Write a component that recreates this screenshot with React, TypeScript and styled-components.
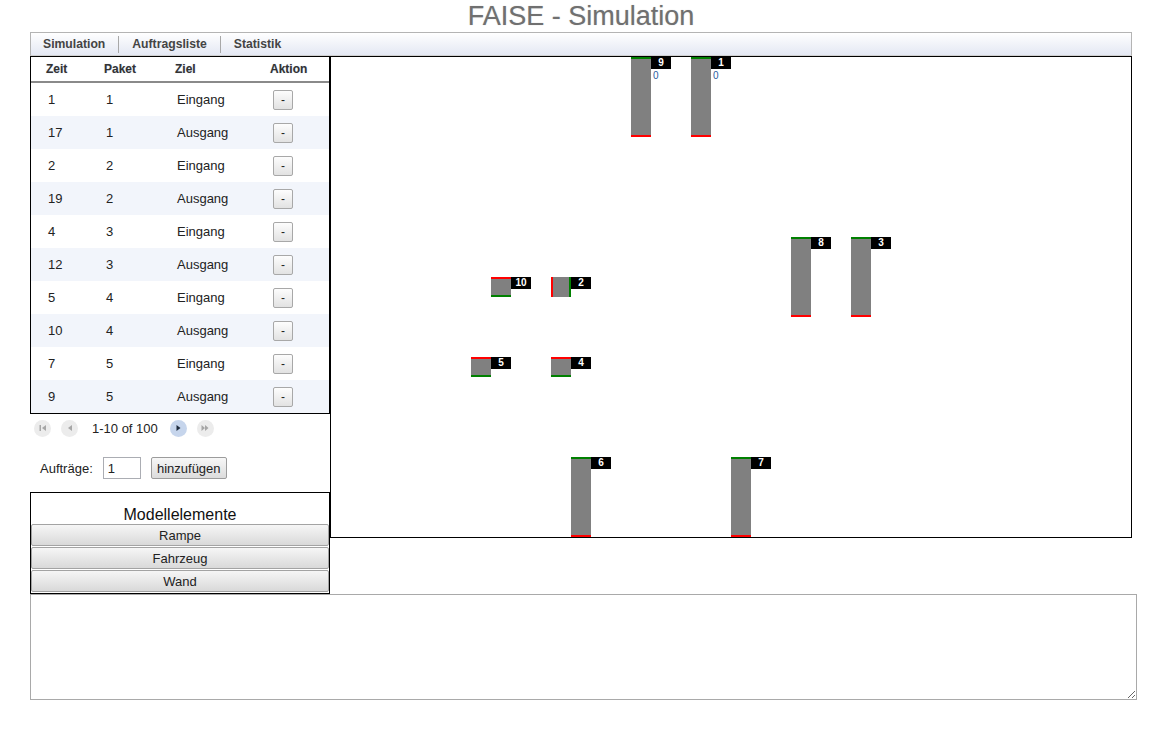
import React from "react";
import styled, { createGlobalStyle, css } from "styled-components";

const Global = createGlobalStyle`
  html, body { margin: 0; padding: 0; background: #fff; }
  body { font-family: "Liberation Sans", Arial, sans-serif; color: #222; }
  * { box-sizing: border-box; }
`;

const Page = styled.div`
  width: 1173px;
  padding-left: 30px;
`;

const Container = styled.div`
  width: 1102px;
`;

const Title = styled.h1`
  margin: 0;
  height: 32px;
  line-height: 32px;
  font-size: 27px;
  font-weight: normal;
  color: #707070;
  text-align: center;
  text-shadow: 0 0 1px rgba(80, 80, 80, 0.35);
`;

const TabBar = styled.div`
  height: 24px;
  display: flex;
  align-items: center;
  border: 1px solid #b4b4b4;
  border-bottom-color: #d0d0d0;
  background: linear-gradient(to bottom, #ffffff 0%, #f1f3f9 50%, #e4e8f3 100%);
`;

const Tab = styled.div<{ $first?: boolean }>`
  height: 17px;
  line-height: 17px;
  padding: 0 13px 0 ${(p) => (p.$first ? "12px" : "13px")};
  font-size: 12.2px;
  font-weight: bold;
  color: #444;
  border-left: ${(p) => (p.$first ? "none" : "1px solid #a8a8a8")};
`;

const MainRow = styled.div`
  display: flex;
  align-items: flex-start;
`;

const LeftCol = styled.div`
  width: 300px;
  display: flex;
  flex-direction: column;
`;

const Table = styled.div`
  border: 1px solid #000;
  width: 300px;
`;

const grid = css`
  display: grid;
  grid-template-columns: 58px 71px 100px 1fr;
  align-items: center;
`;

const HeadRow = styled.div`
  ${grid};
  height: 26px;
  border-bottom: 2px solid #8a8a8a;
  font-size: 12px;
  font-weight: bold;
  color: #333;
`;

const HeadCell = styled.div<{ $pad: number }>`
  padding-left: ${(p) => p.$pad}px;
  text-shadow: 0 0 1px rgba(60, 90, 160, 0.35);
`;

const Row = styled.div<{ $alt: boolean }>`
  ${grid};
  height: 33px;
  font-size: 13px;
  color: #222;
  background: ${(p) => (p.$alt ? "#f2f5fb" : "#fff")};
`;

const Cell = styled.div<{ $pad: number }>`
  padding-left: ${(p) => p.$pad}px;
`;

const SmallBtn = styled.button`
  width: 20px;
  height: 20px;
  padding: 0;
  border: 1px solid #a8a8a8;
  border-radius: 2px;
  background: linear-gradient(to bottom, #fdfdfd, #e2e2e2);
  font-family: "Liberation Sans", Arial, sans-serif;
  font-size: 12px;
  color: #222;
  line-height: 16px;
`;

const Pager = styled.div`
  height: 28px;
  display: flex;
  align-items: center;
  padding-left: 4px;
  font-size: 13px;
  color: #222;
`;

const PageIcon = styled.span<{ $active?: boolean; $ml: number }>`
  width: 17px;
  height: 17px;
  border-radius: 50%;
  margin-left: ${(p) => p.$ml}px;
  display: inline-flex;
  align-items: center;
  justify-content: center;
  background: ${(p) => (p.$active ? "#c6d5ec" : "#ececec")};
  color: ${(p) => (p.$active ? "#1d2a3c" : "#a6a6a6")};
`;

const PageText = styled.span`
  margin-left: 14px;
`;

const OrderRow = styled.div`
  margin-top: 15px;
  height: 22px;
  display: flex;
  align-items: center;
  padding-left: 10px;
  font-size: 13px;
  color: #222;
`;

const CountInput = styled.input`
  margin-left: 10px;
  width: 38px;
  height: 22px;
  border: 1px solid #abadb3;
  padding: 0 4px;
  font-family: "Liberation Sans", Arial, sans-serif;
  font-size: 13px;
  color: #222;
  outline: none;
`;

const AddBtn = styled.button`
  margin-left: 10px;
  width: 76px;
  height: 22px;
  padding: 0;
  border: 1px solid #9c9c9c;
  border-radius: 2px;
  background: linear-gradient(to bottom, #f7f7f7, #dcdcdc);
  font-family: "Liberation Sans", Arial, sans-serif;
  font-size: 13px;
  color: #222;
`;

const ModelBox = styled.div`
  margin-top: 13px;
  border: 1px solid #000;
  width: 300px;
  padding-bottom: 1px;
`;

const ModelTitle = styled.div`
  padding-top: 12px;
  line-height: 19px;
  font-size: 16px;
  text-align: center;
  color: #111;
`;

const ModelBtn = styled.button`
  display: block;
  width: 100%;
  height: 22px;
  margin: 0 0 1px 0;
  padding: 0;
  border: 1px solid #a3a3a3;
  border-radius: 2px;
  background: linear-gradient(to bottom, #f6f6f6, #d9d9d9);
  font-family: "Liberation Sans", Arial, sans-serif;
  font-size: 13px;
  color: #222;
  &:last-child { margin-bottom: 0; }
`;

const Canvas = styled.div`
  position: relative;
  width: 802px;
  height: 482px;
  border: 1px solid #000;
  background: #fff;
`;

type Kind = "v" | "h" | "s";

const Bar = styled.div<{ $kind: Kind }>`
  position: absolute;
  width: 20px;
  height: ${(p) => (p.$kind === "v" ? "80px" : "20px")};
  background: #808080;
  ${(p) =>
    p.$kind === "v"
      ? css`
          border-top: 2px solid #008000;
          border-bottom: 2px solid #ff0000;
        `
      : p.$kind === "h"
      ? css`
          border-top: 2px solid #ff0000;
          border-bottom: 2px solid #008000;
        `
      : css`
          border-left: 2px solid #ff0000;
          border-right: 2px solid #008000;
        `}
`;

const Tag = styled.div`
  position: absolute;
  width: 20px;
  height: 12px;
  background: #000;
  color: #fff;
  font-size: 10px;
  font-weight: bold;
  line-height: 12px;
  text-align: center;
`;

const Counter = styled.div`
  position: absolute;
  font-size: 10px;
  line-height: 11px;
  color: #2a5c9e;
`;

const Notes = styled.textarea`
  display: block;
  width: 1107px;
  height: 106px;
  border: 1px solid #a9a9a9;
  margin: 0;
  font-family: "Liberation Mono", monospace;
  font-size: 13px;
`;

const orders: [string, string, string][] = [
  ["1", "1", "Eingang"],
  ["17", "1", "Ausgang"],
  ["2", "2", "Eingang"],
  ["19", "2", "Ausgang"],
  ["4", "3", "Eingang"],
  ["12", "3", "Ausgang"],
  ["5", "4", "Eingang"],
  ["10", "4", "Ausgang"],
  ["7", "5", "Eingang"],
  ["9", "5", "Ausgang"],
];

const elements: { id: string; x: number; y: number; kind: Kind; count?: string }[] = [
  { id: "9", x: 300, y: 0, kind: "v", count: "0" },
  { id: "1", x: 360, y: 0, kind: "v", count: "0" },
  { id: "8", x: 460, y: 180, kind: "v" },
  { id: "3", x: 520, y: 180, kind: "v" },
  { id: "10", x: 160, y: 220, kind: "h" },
  { id: "2", x: 220, y: 220, kind: "s" },
  { id: "5", x: 140, y: 300, kind: "h" },
  { id: "4", x: 220, y: 300, kind: "h" },
  { id: "6", x: 240, y: 400, kind: "v" },
  { id: "7", x: 400, y: 400, kind: "v" },
];

const FirstIcon = () => (
  <svg width="10" height="10" viewBox="0 0 10 10">
    <rect x="1.5" y="2" width="1.5" height="6" fill="currentColor" />
    <path d="M8 2 L4 5 L8 8 Z" fill="currentColor" />
  </svg>
);
const PrevIcon = () => (
  <svg width="10" height="10" viewBox="0 0 10 10">
    <path d="M7 2 L3 5 L7 8 Z" fill="currentColor" />
  </svg>
);
const NextIcon = () => (
  <svg width="10" height="10" viewBox="0 0 10 10">
    <path d="M3.5 2 L7.5 5 L3.5 8 Z" fill="currentColor" />
  </svg>
);
const LastIcon = () => (
  <svg width="10" height="10" viewBox="0 0 10 10">
    <path d="M1.5 2 L5 5 L1.5 8 Z M5 2 L8.5 5 L5 8 Z" fill="currentColor" />
  </svg>
);

export default function App() {
  return (
    <>
      <Global />
      <Page>
        <Container>
          <Title>FAISE - Simulation</Title>
          <TabBar>
            <Tab $first>Simulation</Tab>
            <Tab>Auftragsliste</Tab>
            <Tab>Statistik</Tab>
          </TabBar>
          <MainRow>
            <LeftCol>
              <Table>
                <HeadRow>
                  <HeadCell $pad={15}>Zeit</HeadCell>
                  <HeadCell $pad={15}>Paket</HeadCell>
                  <HeadCell $pad={15}>Ziel</HeadCell>
                  <HeadCell $pad={10}>Aktion</HeadCell>
                </HeadRow>
                {orders.map((o, i) => (
                  <Row key={i} $alt={i % 2 === 1}>
                    <Cell $pad={17}>{o[0]}</Cell>
                    <Cell $pad={17}>{o[1]}</Cell>
                    <Cell $pad={17}>{o[2]}</Cell>
                    <Cell $pad={13}>
                      <SmallBtn>-</SmallBtn>
                    </Cell>
                  </Row>
                ))}
              </Table>
              <Pager>
                <PageIcon $ml={0}>
                  <FirstIcon />
                </PageIcon>
                <PageIcon $ml={10}>
                  <PrevIcon />
                </PageIcon>
                <PageText>1-10 of 100</PageText>
                <PageIcon $active $ml={12}>
                  <NextIcon />
                </PageIcon>
                <PageIcon $ml={10}>
                  <LastIcon />
                </PageIcon>
              </Pager>
              <OrderRow>
                Aufträge:
                <CountInput defaultValue="1" />
                <AddBtn>hinzufügen</AddBtn>
              </OrderRow>
              <ModelBox>
                <ModelTitle>Modellelemente</ModelTitle>
                <ModelBtn>Rampe</ModelBtn>
                <ModelBtn>Fahrzeug</ModelBtn>
                <ModelBtn>Wand</ModelBtn>
              </ModelBox>
            </LeftCol>
            <Canvas>
              {elements.map((e) => (
                <React.Fragment key={e.id}>
                  <Bar $kind={e.kind} style={{ left: e.x, top: e.y }} />
                  <Tag style={{ left: e.x + 20, top: e.y }}>{e.id}</Tag>
                  {e.count && (
                    <Counter style={{ left: e.x + 22, top: e.y + 13 }}>{e.count}</Counter>
                  )}
                </React.Fragment>
              ))}
            </Canvas>
          </MainRow>
          <Notes />
        </Container>
      </Page>
    </>
  );
}
